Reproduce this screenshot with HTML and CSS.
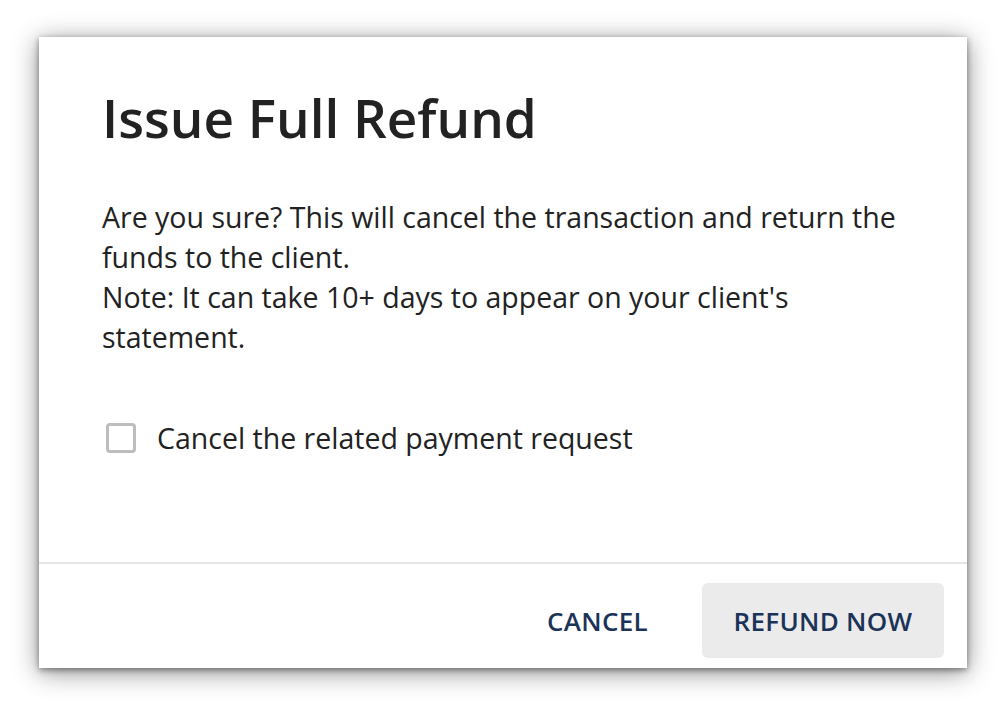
FILE: index.html
```html
<!DOCTYPE html>
<html>
<head>
<meta charset="utf-8">
<link rel="stylesheet" href="styles.css">
</head>
<body>
<div class="dialog">
  <div class="content">
    <h1 class="title">Issue Full Refund</h1>
    <p class="message">Are you sure? This will cancel the transaction and return the funds to the client.<br>Note: It can take 10+ days to appear on your client's statement.</p>
    <label class="check">
      <span class="box"></span>
      <span class="check-label">Cancel the related payment request</span>
    </label>
  </div>
  <div class="footer">
    <button class="btn btn-text">CANCEL</button>
    <button class="btn btn-filled">REFUND NOW</button>
  </div>
</div>
</body>
</html>
```
FILE: styles.css
```css
html, body {
  margin: 0;
  padding: 0;
  background: #ffffff;
  font-family: "Open Sans", "Noto Sans", sans-serif;
}
body {
  padding: 37px 0 44px 39px;
  min-height: 712px;
  box-sizing: border-box;
}
.dialog {
  width: 928px;
  height: 631px;
  background: #fff;
  box-shadow: 0 2px 6px rgba(0,0,0,0.4), 0 4px 24px rgba(0,0,0,0.45);
  display: flex;
  flex-direction: column;
}
.content {
  flex: 1;
  padding: 0 63px;
}
.title {
  margin: 0;
  padding-top: 45px;
  font-size: 53px;
  line-height: 72px;
  font-weight: 600;
  color: #222;
}
.message {
  margin: 43px 0 0;
  font-size: 28.5px;
  line-height: 40px;
  color: #222;
}
.check {
  display: flex;
  align-items: center;
  margin-top: 61px;
  padding-left: 4px;
  line-height: 40px;
}
.box {
  width: 24px;
  height: 24px;
  border: 3px solid #bdbdbd;
  border-radius: 4px;
}
.check-label {
  margin-left: 21px;
  font-size: 28.5px;
  color: #222;
}
.footer {
  border-top: 2px solid #e6e6e6;
  height: 106px;
  display: flex;
  justify-content: flex-end;
  align-items: flex-start;
  padding: 19px 23px 0 0;
  box-sizing: border-box;
  gap: 22px;
}
.btn {
  font-family: "Open Sans", "Noto Sans", sans-serif;
  font-size: 26px;
  font-weight: 600;
  letter-spacing: 0.3px;
  color: #1b3358;
  border: none;
  background: transparent;
  height: 75px;
  padding: 0 32px;
  border-radius: 6px;
  white-space: nowrap;
}
.btn-filled {
  background: #ebebeb;
  width: 242px;
  padding: 0;
}
```
